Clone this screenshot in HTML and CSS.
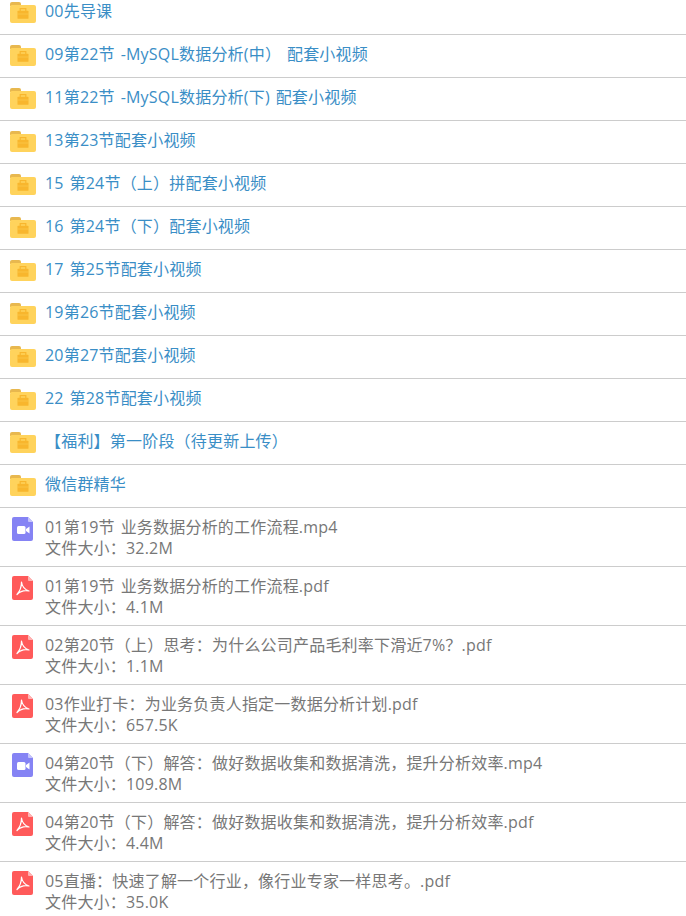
FILE: index.html
```html
<!DOCTYPE html>
<html lang="zh-CN">
<head>
    <meta charset="UTF-8">
    <title>文件列表</title>
    <link rel="stylesheet" href="styles.css">
</head>
<body>

<svg class="defs" width="0" height="0">
    <symbol id="folder" viewBox="0 0 26 21">
        <path d="M0 2a2 2 0 0 1 2-2h7a2 2 0 0 1 2 2v2H0z" fill="#e8b84f"/>
        <path d="M0 5a2 2 0 0 1 2-2h22a2 2 0 0 1 2 2v14a2 2 0 0 1-2 2H2a2 2 0 0 1-2-2z" fill="#ffd35c"/>
        <path d="M10.200 9V6.600h5.600V9" fill="none" stroke="#f8b62d" stroke-width="1.200"/>
        <rect x="7.500" y="8.800" width="11" height="8" rx=".6" fill="#f8b62d"/>
        <path d="M7.500 12h11" stroke="#ffd35c" stroke-width=".5"/>
    </symbol>
    <symbol id="video" viewBox="0 0 21 24">
        <path d="M2 0h14l5 5v17a2 2 0 0 1-2 2H2a2 2 0 0 1-2-2V2a2 2 0 0 1 2-2z" fill="#8583f4"/>
        <path d="M16 0l5 5h-4a1 1 0 0 1-1-1z" fill="#c5c4fb"/>
        <rect x="5" y="9" width="8.500" height="8" rx="1.500" fill="#fff"/>
        <path d="M14 12l3.500-2.500v7L14 14z" fill="#fff"/>
    </symbol>
    <symbol id="pdf" viewBox="0 0 21 24">
        <path d="M2 0h14l5 5v17a2 2 0 0 1-2 2H2a2 2 0 0 1-2-2V2a2 2 0 0 1 2-2z" fill="#ff5a5a"/>
        <path d="M16 0l5 5h-4a1 1 0 0 1-1-1z" fill="#ffb4b4"/>
        <path d="M9.500 6C9.500 10 8.500 14.500 5 18.500M9.500 6C10 10 12.500 13.500 17 15M5 18.500C8 15.500 12.500 14 17 15" fill="none" stroke="#fff" stroke-width="1.200" stroke-linecap="round"/>
    </symbol>
</svg>

<ul class="file-list">
    <li class="row folder-row"><svg class="folder-icon"><use href="#folder"/></svg><div class="name">00先导课</div></li>
    <li class="row folder-row"><svg class="folder-icon"><use href="#folder"/></svg><div class="name">09第22节 -MySQL数据分析(中） 配套小视频</div></li>
    <li class="row folder-row"><svg class="folder-icon"><use href="#folder"/></svg><div class="name">11第22节 -MySQL数据分析(下) 配套小视频</div></li>
    <li class="row folder-row"><svg class="folder-icon"><use href="#folder"/></svg><div class="name">13第23节配套小视频</div></li>
    <li class="row folder-row"><svg class="folder-icon"><use href="#folder"/></svg><div class="name">15 第24节（上）拼配套小视频</div></li>
    <li class="row folder-row"><svg class="folder-icon"><use href="#folder"/></svg><div class="name">16 第24节（下）配套小视频</div></li>
    <li class="row folder-row"><svg class="folder-icon"><use href="#folder"/></svg><div class="name">17 第25节配套小视频</div></li>
    <li class="row folder-row"><svg class="folder-icon"><use href="#folder"/></svg><div class="name">19第26节配套小视频</div></li>
    <li class="row folder-row"><svg class="folder-icon"><use href="#folder"/></svg><div class="name">20第27节配套小视频</div></li>
    <li class="row folder-row"><svg class="folder-icon"><use href="#folder"/></svg><div class="name">22 第28节配套小视频</div></li>
    <li class="row folder-row"><svg class="folder-icon"><use href="#folder"/></svg><div class="name">【福利】第一阶段（待更新上传）</div></li>
    <li class="row folder-row"><svg class="folder-icon"><use href="#folder"/></svg><div class="name">微信群精华</div></li>

    <li class="row file-row"><svg class="file-icon"><use href="#video"/></svg><div><div class="name">01第19节 业务数据分析的工作流程.mp4</div><div class="size">文件大小：32.2M</div></div></li>
    <li class="row file-row"><svg class="file-icon"><use href="#pdf"/></svg><div><div class="name">01第19节 业务数据分析的工作流程.pdf</div><div class="size">文件大小：4.1M</div></div></li>
    <li class="row file-row"><svg class="file-icon"><use href="#pdf"/></svg><div><div class="name">02第20节（上）思考：为什么公司产品毛利率下滑近7%？.pdf</div><div class="size">文件大小：1.1M</div></div></li>
    <li class="row file-row"><svg class="file-icon"><use href="#pdf"/></svg><div><div class="name">03作业打卡：为业务负责人指定一数据分析计划.pdf</div><div class="size">文件大小：657.5K</div></div></li>
    <li class="row file-row"><svg class="file-icon"><use href="#video"/></svg><div><div class="name">04第20节（下）解答：做好数据收集和数据清洗，提升分析效率.mp4</div><div class="size">文件大小：109.8M</div></div></li>
    <li class="row file-row"><svg class="file-icon"><use href="#pdf"/></svg><div><div class="name">04第20节（下）解答：做好数据收集和数据清洗，提升分析效率.pdf</div><div class="size">文件大小：4.4M</div></div></li>
    <li class="row file-row"><svg class="file-icon"><use href="#pdf"/></svg><div><div class="name">05直播：快速了解一个行业，像行业专家一样思考。.pdf</div><div class="size">文件大小：35.0K</div></div></li>
</ul>

</body>
</html>
```

FILE: styles.css
```css
html, body {
    height: 100%;
    overflow: hidden;
}

body {
    margin: 0;
    background-color: #fff;
    font-family: "Open Sans", "Noto Sans CJK SC", sans-serif;
    font-size: 16px;
    letter-spacing: 0.2px;
    word-spacing: 1.5px;
    color: #777;
}

.defs {
    display: block;
    height: 0;
}

.file-list {
    list-style-type: none;
    margin: -8px 0 0;
    padding: 0;
}

.row {
    display: flex;
    align-items: flex-start;
    box-sizing: border-box;
    border-bottom: 1px solid #ccc;
    padding-top: 9px;
}

.folder-row {
    height: 43px;
    color: #3a8ec6;
}

.file-row {
    height: 59px;
}

.name, .size {
    height: 21px;
    line-height: 21px;
    white-space: nowrap;
}

.folder-row .name {
    line-height: 20px;
}

.folder-icon {
    width: 26px;
    height: 21px;
    margin: 1px 9px 0 10px;
    flex: none;
}

.file-icon {
    width: 21px;
    height: 24px;
    margin: 0 12px 0 12px;
    flex: none;
}
```
